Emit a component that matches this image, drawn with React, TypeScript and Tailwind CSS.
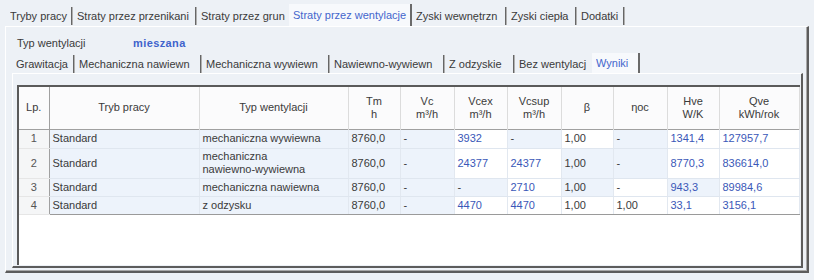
import React from "react";

interface TabDef {
    label: string;
    w: number;
}

const topTabs: TabDef[] = [
    { label: "Tryby pracy", w: 67 },
    { label: "Straty przez przenikani", w: 124 },
    { label: "Straty przez grun", w: 92 },
    { label: "Straty przez wentylacje", w: 123 },
    { label: "Zyski wewnętrzn", w: 95 },
    { label: "Zyski ciepła", w: 70 },
    { label: "Dodatki", w: 48 },
];

const subTabs: TabDef[] = [
    { label: "Grawitacja", w: 63 },
    { label: "Mechaniczna nawiewn", w: 127 },
    { label: "Mechaniczna wywiewn", w: 128 },
    { label: "Nawiewno-wywiewn", w: 115 },
    { label: "Z odzyskie", w: 70 },
    { label: "Bez wentylacj", w: 77 },
    { label: "Wyniki", w: 48 },
];

interface Row {
    lp: string;
    tryb: string;
    typ: string[];
    tm: string;
    vc: string;
    vcex: string;
    vcsup: string;
    beta: string;
    eta: string;
    hve: string;
    qve: string;
    h: string;
    white: number[]; // columns with white background
}

const rows: Row[] = [
    { lp: "1", tryb: "Standard", typ: ["mechaniczna wywiewna"], tm: "8760,0", vc: "-", vcex: "3932", vcsup: "-", beta: "1,00", eta: "-", hve: "1341,4", qve: "127957,7", h: "h-[19px]", white: [5, 7, 9, 10] },
    { lp: "2", tryb: "Standard", typ: ["mechaniczna", "nawiewno-wywiewna"], tm: "8760,0", vc: "-", vcex: "24377", vcsup: "24377", beta: "1,00", eta: "-", hve: "8770,3", qve: "836614,0", h: "h-[30px]", white: [5, 6, 9, 10] },
    { lp: "3", tryb: "Standard", typ: ["mechaniczna nawiewna"], tm: "8760,0", vc: "-", vcex: "-", vcsup: "2710", beta: "1,00", eta: "-", hve: "943,3", qve: "89984,6", h: "h-[18px]", white: [6, 8, 10] },
    { lp: "4", tryb: "Standard", typ: ["z odzysku"], tm: "8760,0", vc: "-", vcex: "4470", vcsup: "4470", beta: "1,00", eta: "1,00", hve: "33,1", qve: "3156,1", h: "h-[18px]", white: [5, 6, 7, 8, 9, 10] },
];

const colWidths = [30, 150, 149, 52, 54, 53, 54, 52, 54, 52, 80];

const headers: string[][] = [
    ["Lp."],
    ["Tryb pracy"],
    ["Typ wentylacji"],
    ["Tm", "h"],
    ["Vc", "m³/h"],
    ["Vcex", "m³/h"],
    ["Vcsup", "m³/h"],
    ["β"],
    ["ηoc"],
    ["Hve", "W/K"],
    ["Qve", "kWh/rok"],
];

const blueCols = [5, 6, 9, 10];

const TabRow: React.FC<{ tabs: TabDef[]; active: number; h: string }> = ({ tabs, active, h }) => (
    <div className={`flex ${h}`}>
        {tabs.map((t, i) => {
            const isActive = i === active;
            const sep = !isActive && i + 1 !== active;
            return (
                <div
                    key={i}
                    style={{ width: t.w }}
                    className={`flex items-center pl-[4px] shrink-0 ${
                        isActive ? "bg-[#f7f9fc] text-[#4466cc] -mt-[2px] border-r-2 border-[#6a6a6a]" : ""
                    }`}
                >
                    <span className="flex-1 whitespace-nowrap overflow-hidden">{t.label}</span>
                    {sep && <span className="w-[2px] h-[18px] bg-[#666] border-r border-[#b0b0b0] shrink-0" />}
                </div>
            );
        })}
    </div>
);

export default function App() {
    return (
        <div
            className="w-[814px] h-[280px] bg-[#edf1f6] text-[11px] text-[#3a3a3a] pt-[6px] overflow-hidden"
            style={{ fontFamily: '"Liberation Sans", Arial, sans-serif' }}
        >
            <div className="pl-[6px]">
                <TabRow tabs={topTabs} active={3} h="h-[20px]" />
            </div>
            {/* outer panel */}
            <div className="ml-[5px] w-[804px] h-[247px] border-t border-l border-t-white border-l-white border-r-2 border-b-2 border-r-[#5c5c5c] border-b-[#5c5c5c] shadow-[inset_-1px_-1px_0_#a8a8a8]">
                <div className="h-[28px] pt-[4px] pl-[11px] flex items-center">
                    <span className="w-[116px]">Typ wentylacji</span>
                    <span className="font-bold text-[#3f63cc] tracking-[0.4px]">mieszana</span>
                </div>
                <div className="pl-[6px]">
                    <TabRow tabs={subTabs} active={6} h="h-[18px]" />
                </div>
                {/* inner panel */}
                <div className="ml-[6px] w-[791px] h-[195px] border-t border-l border-t-white border-l-white border-r-2 border-b-2 border-r-[#5c5c5c] border-b-[#5c5c5c] pt-[11px] pl-[4px]">
                    <div className="w-[783px] h-[180px] bg-white border-t-2 border-l-2 border-[#5a5a5a]">
                        <table className="table-fixed border-collapse" style={{ width: 780 }}>
                            <colgroup>
                                {colWidths.map((w, i) => (
                                    <col key={i} style={{ width: w }} />
                                ))}
                            </colgroup>
                            <thead>
                                <tr className="h-[42px] bg-[#fbfbfc] border-b border-[#a0a0a0]">
                                    {headers.map((hd, i) => (
                                        <th
                                            key={i}
                                            className={`font-normal text-center leading-[13px] p-0 text-[#3a3a3a] ${
                                                i === 0 ? "border-r border-r-[#a0a0a0]" : "border-r border-r-[#dcdcdc]"
                                            }`}
                                        >
                                            {hd.map((l, j) => (
                                                <div key={j}>{l}</div>
                                            ))}
                                        </th>
                                    ))}
                                </tr>
                            </thead>
                            <tbody>
                                {rows.map((r, ri) => {
                                    const cells = [r.lp, r.tryb, r.typ, r.tm, r.vc, r.vcex, r.vcsup, r.beta, r.eta, r.hve, r.qve];
                                    const last = ri === rows.length - 1;
                                    return (
                                        <tr key={ri} className={r.h}>
                                            {cells.map((c, ci) => (
                                                <td
                                                    key={ci}
                                                    className={`p-0 align-middle leading-[13px] ${
                                                        ci === 0
                                                            ? "text-center text-[#555] bg-[#f5f6f7] border-r border-r-[#a0a0a0] border-b border-b-[#e6e6e6]"
                                                            : `pl-[3px] border-r border-r-[#e2e8f0] border-b ${
                                                                  last ? "border-b-[#9a9a9a]" : "border-b-[#dfe6ef]"
                                                              } ${r.white.includes(ci) ? "bg-white" : "bg-[#edf3fb]"}`
                                                    } ${blueCols.includes(ci) && c !== "-" ? "text-[#3a58b8]" : ""}`}
                                                >
                                                    {Array.isArray(c) ? c.map((l, li) => <div key={li}>{l}</div>) : c}
                                                </td>
                                            ))}
                                        </tr>
                                    );
                                })}
                            </tbody>
                        </table>
                    </div>
                </div>
            </div>
        </div>
    );
}
